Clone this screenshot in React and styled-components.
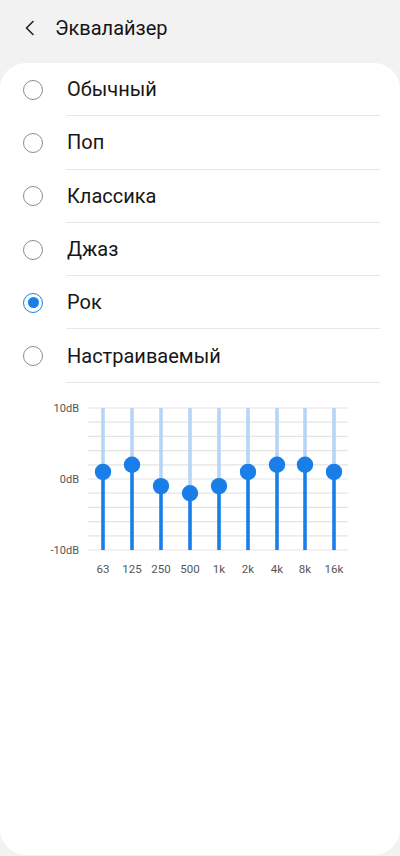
import { useState } from "react";
import styled, { createGlobalStyle } from "styled-components";

const presets = ["Обычный", "Поп", "Классика", "Джаз", "Рок", "Настраиваемый"];

const bands = [
    { label: "63", x: 103, value: 1 },
    { label: "125", x: 132, value: 2 },
    { label: "250", x: 161, value: -1 },
    { label: "500", x: 190, value: -2 },
    { label: "1k", x: 219, value: -1 },
    { label: "2k", x: 248, value: 1 },
    { label: "4k", x: 277, value: 2 },
    { label: "8k", x: 305, value: 2 },
    { label: "16k", x: 334, value: 1 },
];

// chart geometry (svg coords)
const TOP = 13;
const STEP = 14.2;
const ZERO = TOP + STEP * 5;
const BOTTOM = TOP + STEP * 10;

export default function App () {

    const [selected, setSelected] = useState("Рок");

    return (
        <>
            <GlobalStyle />
            <Page>
                <Header>
                    <BackButton aria-label="Назад">
                        <svg width="12" height="16" viewBox="0 0 12 16">
                            <path d="M9 1.5 L2.5 8 L9 14.5" fill="none" stroke="#222" strokeWidth="1.6" strokeLinecap="round" strokeLinejoin="round" />
                        </svg>
                    </BackButton>
                    <Title>Эквалайзер</Title>
                </Header>
                <Card>
                    <List>
                        {presets.map((name) => (
                            <Row key={name} onClick={() => setSelected(name)}>
                                <RadioCell>
                                    <Radio $checked={selected === name} />
                                </RadioCell>
                                <Label>{name}</Label>
                            </Row>
                        ))}
                    </List>
                    <Chart width="400" height="200" viewBox="0 0 400 200">
                        {Array.from({ length: 11 }).map((_, i) => (
                            <line key={i} x1="88" x2="348" y1={TOP + i * STEP} y2={TOP + i * STEP} stroke="#e4e4e4" strokeWidth="1.2" />
                        ))}
                        <AxisText x="79" y={TOP + 4}>10dB</AxisText>
                        <AxisText x="79" y={ZERO + 4}>0dB</AxisText>
                        <AxisText x="79" y={BOTTOM + 4}>-10dB</AxisText>
                        {bands.map((b) => {
                            const ky = ZERO - b.value * STEP / 2;
                            return (
                                <g key={b.label}>
                                    <line x1={b.x} x2={b.x} y1={TOP} y2={ky} stroke="#b7d6f7" strokeWidth="3.6" />
                                    <line x1={b.x} x2={b.x} y1={ky} y2={BOTTOM} stroke="#1a7ee9" strokeWidth="3.6" />
                                    <circle cx={b.x} cy={ky} r="8.2" fill="#1a7ee9" />
                                    <FreqText x={b.x} y="178">{b.label}</FreqText>
                                </g>
                            );
                        })}
                    </Chart>
                </Card>
            </Page>
        </>
    );
};

const GlobalStyle = createGlobalStyle`
    html, body {
        margin: 0;
        padding: 0;
        background-color: #f2f2f2;
        font-family: Roboto, "Noto Sans", sans-serif;
    }
`;

const Page = styled.div`
    width: 400px;
    height: 856px;
    display: flex;
    flex-direction: column;
    background-color: #f2f2f2;
`;

const Header = styled.header`
    height: 63px;
    display: flex;
    align-items: center;
    padding-bottom: 7px;
    box-sizing: border-box;
`;

const BackButton = styled.button`
    all: unset;
    width: 55px;
    height: 30px;
    display: flex;
    align-items: center;
    justify-content: center;
    padding-left: 4px;
    box-sizing: border-box;
`;

const Title = styled.h1`
    margin: 0;
    font-size: 20px;
    font-weight: 400;
    color: #151515;
`;

const Card = styled.main`
    height: 792px;
    background-color: #ffffff;
    border-radius: 26px;
    overflow: hidden;
`;

const List = styled.ul`
    list-style: none;
    margin: 0;
    padding: 0;
`;

const Row = styled.li`
    height: 53.3px;
    display: flex;
    cursor: pointer;
`;

const RadioCell = styled.div`
    width: 66px;
    display: flex;
    align-items: center;
    justify-content: center;
`;

const Radio = styled.span`
    width: 20px;
    height: 20px;
    box-sizing: border-box;
    border-radius: 50%;
    border: ${(p) => p.$checked ? "1.6px solid #1a7ee9" : "1.2px solid #8c8c8c"};
    display: flex;
    align-items: center;
    justify-content: center;

    &::after {
        content: "";
        display: ${(p) => p.$checked ? "block" : "none"};
        width: 11px;
        height: 11px;
        border-radius: 50%;
        background-color: #1a7ee9;
    }
`;

const Label = styled.span`
    flex: 1;
    margin-right: 20px;
    display: flex;
    align-items: center;
    padding-left: 1px;
    font-size: 20px;
    color: #161616;
    border-bottom: 1px solid #e6e6e6;
`;

const Chart = styled.svg`
    display: block;
    margin-top: 12px;
`;

const AxisText = styled.text`
    font-family: Roboto, sans-serif;
    font-size: 11px;
    fill: #555555;
    text-anchor: end;
`;

const FreqText = styled.text`
    font-family: Roboto, sans-serif;
    font-size: 11.5px;
    fill: #555555;
    text-anchor: middle;
`;
